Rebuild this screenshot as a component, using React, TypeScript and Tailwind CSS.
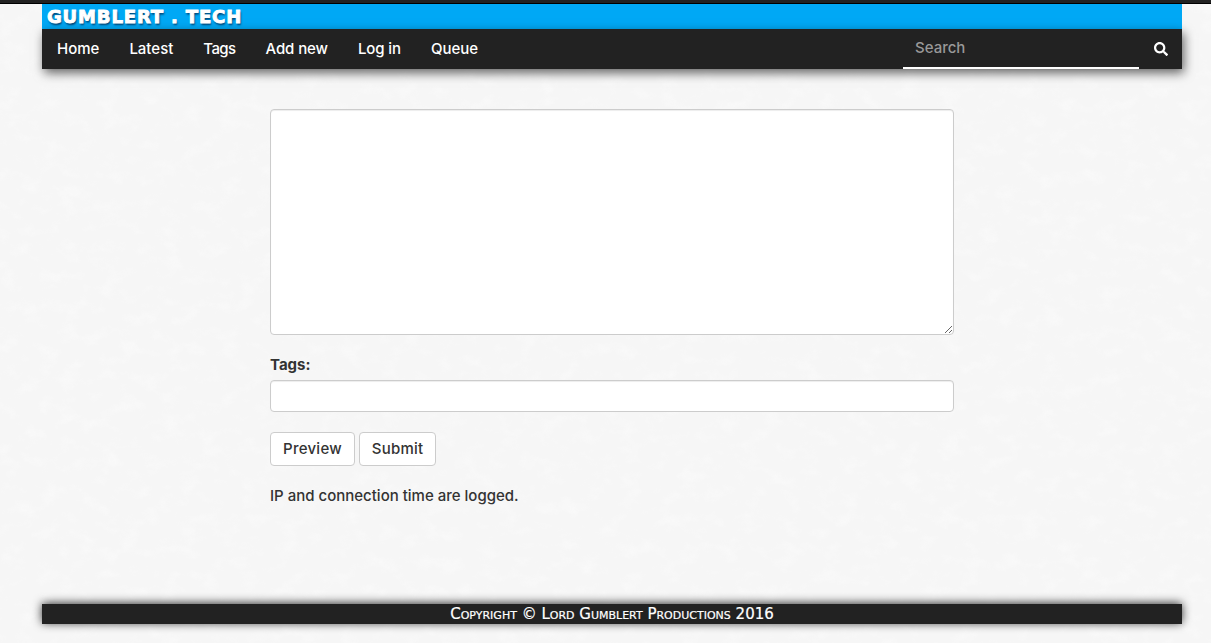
import { FaSearch } from 'react-icons/fa';

const navItems = [
  { label: 'Home', cls: '' },
  { label: 'Latest', cls: '' },
  { label: 'Tags', cls: 'tracking-[-0.6px]' },
  { label: 'Add new', cls: 'tracking-[-0.1px]' },
  { label: 'Log in', cls: 'tracking-[-0.1px]' },
  { label: 'Queue', cls: '' },
];

export default function App() {
  return (
    <div className="relative h-[643px] overflow-hidden bg-[#f6f6f6] font-['Inter','Liberation_Sans',sans-serif] text-[#333333]">
      {/* paper texture behind the page */}
      <svg className="absolute inset-0 h-full w-full opacity-[0.3]" aria-hidden="true">
        <filter id="paper">
          <feTurbulence type="fractalNoise" baseFrequency="0.05 0.07" numOctaves="4" seed="7" />
          <feColorMatrix values="0 0 0 0 1  0 0 0 0 1  0 0 0 0 1  3 0 0 0 -1.5" />
        </filter>
        <rect width="100%" height="100%" filter="url(#paper)" />
      </svg>

      <div className="relative">
        <div className="h-[4px] border-b border-black bg-[#222222]" />
        <div className="ml-[42px] w-[1140px]">
          <header className="flex h-[25px] items-center bg-[#00a8f5] pl-[5px]">
            <span className="font-['DejaVu_Sans','Liberation_Sans',sans-serif] text-[18px] leading-none font-bold tracking-[0.85px] text-white [-webkit-text-stroke:0.9px_white] [text-shadow:1px_2px_2px_rgba(0,40,80,0.8)]">
              GUMBLERT . TECH
            </span>
          </header>
          <nav className="flex h-[40px] items-center bg-[#222222] text-[15px] font-medium text-white shadow-[2px_4px_10px_rgba(0,0,0,0.6)]">
            <div className="flex flex-1 gap-[30px] pl-[15px]">
              {navItems.map((item) => (
                <a key={item.label} href="#" className={item.cls}>
                  {item.label}
                </a>
              ))}
            </div>
            <div className="mr-[15px] flex h-full w-[236px] items-center border-b-2 border-white pl-[12px] text-[#999999]">
              Search
            </div>
            <FaSearch size={14} className="mr-[14px] text-white" />
          </nav>

          <main className="mx-auto mt-[40px] w-[684px] text-[15px]">
            <textarea className="block h-[226px] w-full rounded-[4px] border border-[#cccccc] bg-white shadow-[inset_0_1px_1px_rgba(0,0,0,0.075)]" />
            <label className="mt-[20px] mb-[5px] block h-[20px] text-[15px] leading-[20px] font-bold">Tags:</label>
            <input className="block h-[32px] w-full rounded-[4px] border border-[#cccccc] bg-white shadow-[inset_0_1px_1px_rgba(0,0,0,0.075)]" />
            <div className="mt-[20px] flex gap-[4px]">
              <button className="h-[34px] w-[85px] rounded-[4px] border border-[#cccccc] bg-white font-medium tracking-[0.25px]">Preview</button>
              <button className="h-[34px] w-[77px] rounded-[4px] border border-[#cccccc] bg-white font-medium tracking-[0.2px]">Submit</button>
            </div>
            <p className="mt-[20px] leading-[20px] font-medium">IP and connection time are logged.</p>
          </main>

          <footer className="mt-[98px] flex h-[20px] items-center justify-center bg-[#222222] font-['DejaVu_Sans','Liberation_Sans',sans-serif] text-[15px] text-white shadow-[0_-1px_10px_rgba(0,0,0,0.8)] [font-variant:small-caps] [-webkit-text-stroke:0.2px_white]">
            Copyright © Lord Gumblert Productions 2016
          </footer>
        </div>
      </div>
    </div>
  );
}
